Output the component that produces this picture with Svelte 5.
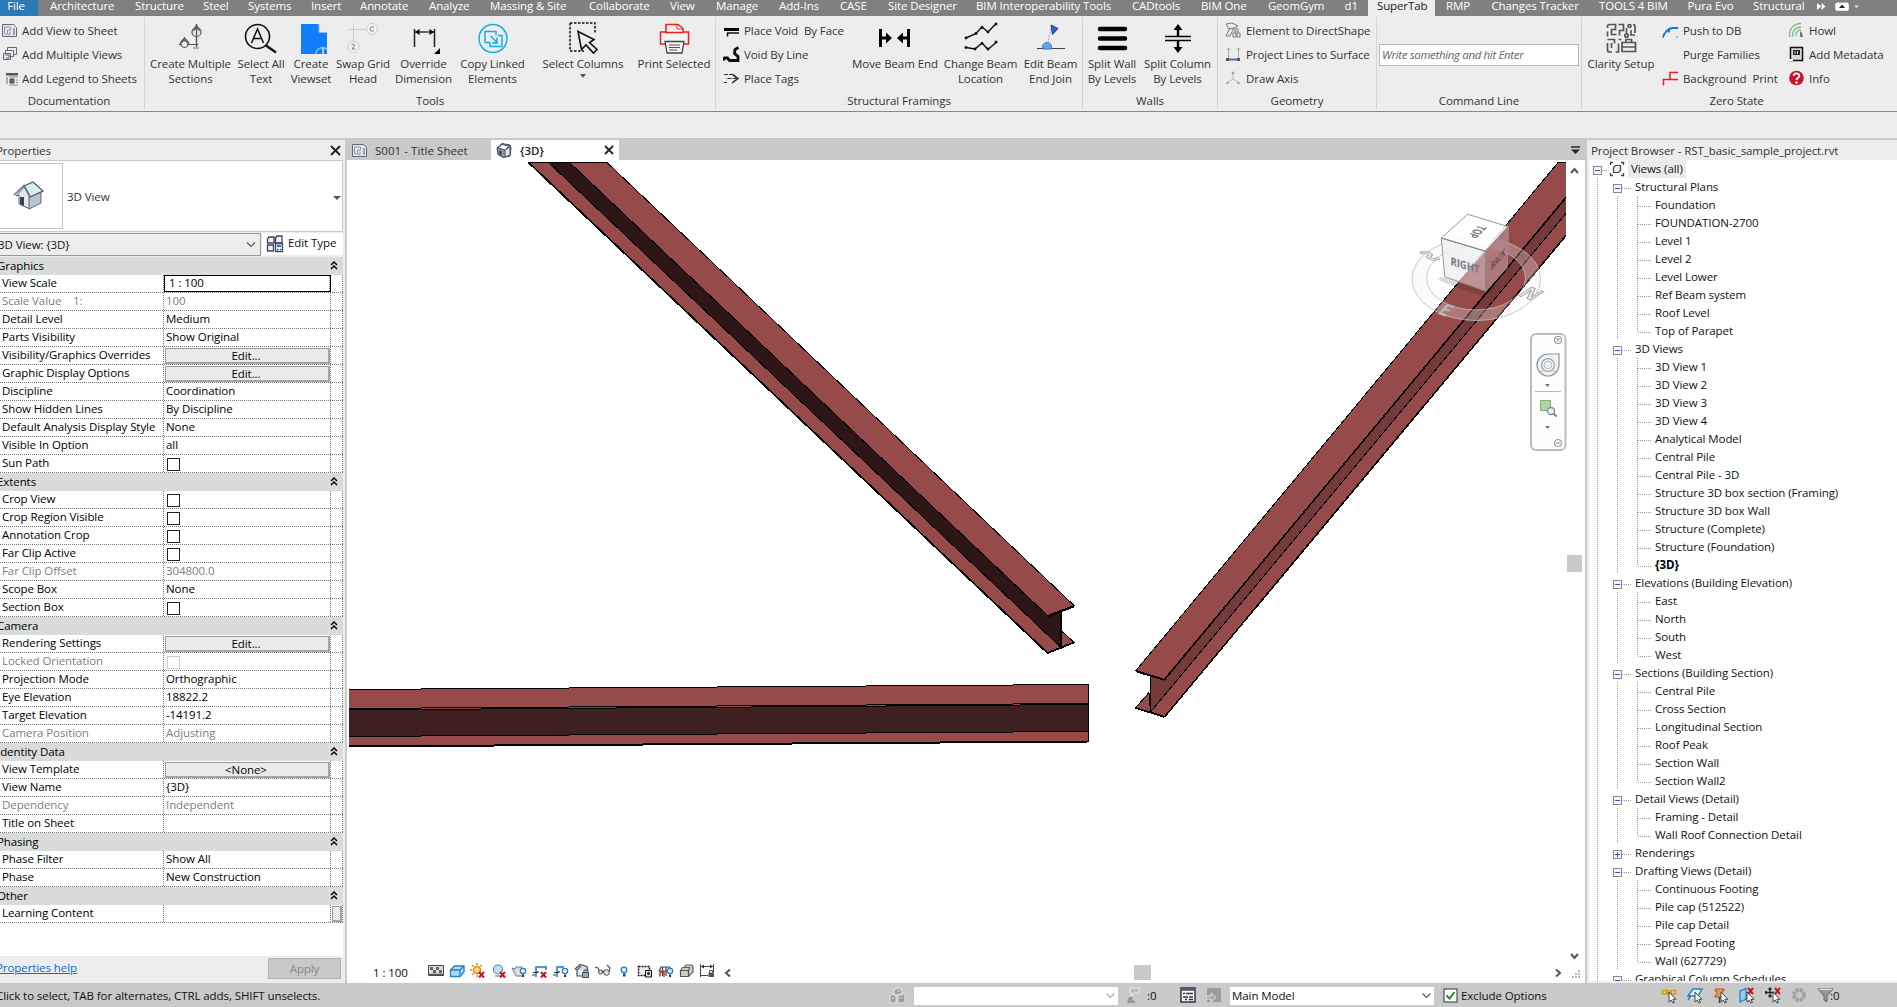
<script>
  // [label, left edge of the label]; each tab is as wide as the distance to the next one
  const tabStops = [
    ['Architecture', 50], ['Structure', 135], ['Steel', 203], ['Systems', 248], ['Insert', 311],
    ['Annotate', 360], ['Analyze', 429], ['Massing & Site', 490], ['Collaborate', 589], ['View', 670],
    ['Manage', 716], ['Add-Ins', 779], ['CASE', 840], ['Site Designer', 888],
    ['BIM Interoperability Tools', 976], ['CADtools', 1132], ['BIM One', 1201], ['GeomGym', 1268],
    ['d1', 1344.5], ['SuperTab', 1377], ['RMP', 1446], ['Changes Tracker', 1491.5],
    ['TOOLS 4 BIM', 1599], ['Pura Evo', 1687.5], ['Structural', 1753], ['', 1817]
  ];
  const tabs = tabStops.slice(0, -1).map(([label, x], i) => ({ label, w: tabStops[i + 1][1] - x }));

  const groups = [
    { name: 'Documentation', w: 145, shift: -3, items: [
      { small: [['sheet', 'Add View to Sheet'], ['multi', 'Add Multiple Views'], ['legend', 'Add Legend to Sheets']], w: 144, pad: 1 }
    ] },
    { name: 'Tools', w: 571, shift: 0, items: [
      { big: 'sections', text: ['Create Multiple', 'Sections'], w: 88, pad: 3 },
      { big: 'selectText', text: ['Select All', 'Text'], w: 56 },
      { big: 'viewset', text: ['Create', 'Viewset'], w: 44 },
      { big: 'swap', text: ['Swap Grid', 'Head'], w: 60 },
      { big: 'dimension', text: ['Override', 'Dimension'], w: 61 },
      { big: 'linked', text: ['Copy Linked', 'Elements'], w: 77 },
      { big: 'columns', text: ['Select Columns'], w: 104, caret: true },
      { big: 'print', text: ['Print Selected'], w: 78 }
    ] },
    { name: 'Structural Framings', w: 367, shift: 0, items: [
      { small: [['voidFace', 'Place Void  By Face'], ['voidLine', 'Void By Line'], ['tags', 'Place Tags']], w: 134, pad: 7 },
      { big: 'moveEnd', text: ['Move Beam End'], w: 90 },
      { big: 'changeLoc', text: ['Change Beam', 'Location'], w: 81 },
      { big: 'endJoin', text: ['Edit Beam', 'End Join'], w: 59 }
    ] },
    { name: 'Walls', w: 135, shift: 0, items: [
      { big: 'splitWall', text: ['Split Wall', 'By Levels'], w: 57, pad: 1 },
      { big: 'splitCol', text: ['Split Column', 'By Levels'], w: 75 }
    ] },
    { name: 'Geometry', w: 159, shift: 0, items: [
      { small: [['direct', 'Element to DirectShape'], ['project', 'Project Lines to Surface'], ['axis', 'Draw Axis']], w: 157, pad: 7 }
    ] },
    { name: 'Command Line', w: 205, shift: 0, items: [{ input: true, w: 204 }] },
    { name: 'Zero State', w: 315, shift: -3, items: [
      { big: 'clarity', text: ['Clarity Setup'], w: 77, pad: 1 },
      { small: [['push', 'Push to DB'], ['', 'Purge Families'], ['bgprint', 'Background  Print']], w: 126, pad: 3 },
      { small: [['howl', 'Howl'], ['meta', 'Add Metadata'], ['info', 'Info']], w: 110, pad: 3 }
    ] }
  ];

  const props = [
    ['Graphics', [
      ['View Scale', '1 : 100', 'field'], ['Scale Value    1:', '100', 'off'], ['Detail Level', 'Medium'],
      ['Parts Visibility', 'Show Original'], ['Visibility/Graphics Overrides', 'Edit...', 'btn'],
      ['Graphic Display Options', 'Edit...', 'btn'], ['Discipline', 'Coordination'],
      ['Show Hidden Lines', 'By Discipline'], ['Default Analysis Display Style', 'None'],
      ['Visible In Option', 'all'], ['Sun Path', '', 'check']
    ]],
    ['Extents', [
      ['Crop View', '', 'check'], ['Crop Region Visible', '', 'check'], ['Annotation Crop', '', 'check'],
      ['Far Clip Active', '', 'check'], ['Far Clip Offset', '304800.0', 'off'], ['Scope Box', 'None'],
      ['Section Box', '', 'check']
    ]],
    ['Camera', [
      ['Rendering Settings', 'Edit...', 'btn'], ['Locked Orientation', '', 'check off'],
      ['Projection Mode', 'Orthographic'], ['Eye Elevation', '18822.2'], ['Target Elevation', '-14191.2'],
      ['Camera Position', 'Adjusting', 'off']
    ]],
    ['Identity Data', [
      ['View Template', '<None>', 'btn'], ['View Name', '{3D}'], ['Dependency', 'Independent', 'off'],
      ['Title on Sheet', '']
    ]],
    ['Phasing', [['Phase Filter', 'Show All'], ['Phase', 'New Construction']]],
    ['Other', [['Learning Content', '', 'more']]]
  ];

  const tree = [
    ['Structural Plans', ['Foundation', 'FOUNDATION-2700', 'Level 1', 'Level 2', 'Level Lower', 'Ref Beam system', 'Roof Level', 'Top of Parapet']],
    ['3D Views', ['3D View 1', '3D View 2', '3D View 3', '3D View 4', 'Analytical Model', 'Central Pile', 'Central Pile - 3D', 'Structure 3D box section (Framing)', 'Structure 3D box Wall', 'Structure (Complete)', 'Structure (Foundation)', '{3D}']],
    ['Elevations (Building Elevation)', ['East', 'North', 'South', 'West']],
    ['Sections (Building Section)', ['Central Pile', 'Cross Section', 'Longitudinal Section', 'Roof Peak', 'Section Wall', 'Section Wall2']],
    ['Detail Views (Detail)', ['Framing - Detail', 'Wall Roof Connection Detail']],
    ['Renderings', []],
    ['Drafting Views (Detail)', ['Continuous Footing', 'Pile cap (512522)', 'Pile cap Detail', 'Spread Footing', 'Wall (627729)']],
    ['Graphical Column Schedules', []]
  ];

  const cursor = '<path d="M8 5v10l2.3-2 1.6 3 1.5-.7-1.5-3h3z" fill="#fff" stroke="#333" stroke-width=".9"/>';
  const redX = '<path d="M9 9l5 5.500M14 9l-5 5.500" stroke="#c4161c" stroke-width="2"/>';
  const bulb = '<circle cx="12" cy="8" r="2.700" fill="#d6ecff" stroke="#2a7fc9" stroke-width="1.200"/><path d="M11 11.500h2.200v2.500H11z" fill="#345"/>';

  const art = {
    sections: '<g fill="none" stroke="#555" stroke-width="1.2"><circle cx="22.5" cy="10" r="4.5"/><path d="M22.500 2v25M5 22.500h19M10.500 22v-7"/><circle cx="10.500" cy="21.500" r="3.800"/></g><path d="M22.500 2l4.500 7h-9z" fill="#666"/><path d="M10.500 15l5.500 6.500h-11z" fill="#666"/><circle cx="10.500" cy="22" r="2.500" fill="#eee"/><circle cx="22.500" cy="10.500" r="3" fill="#e4e4e4"/><path d="M22.500 2v25" stroke="#555" stroke-width="1.200"/><path d="M19 25h6v2h-6z" fill="#c4a4a4"/>',
    selectText: '<g fill="none" stroke="#111"><circle cx="13.500" cy="14.500" r="12" stroke-width="1.600"/><path d="M7.500 21l6-14 6 14M9.500 16.500h8" stroke-width="1.500"/><path d="M22 23.500l10 7" stroke-width="2.600"/></g>',
    viewset: '<path d="M7 2h17l9 9v21H7z" fill="#127cff"/><path d="M25 2.500v8h8" fill="#eee" stroke="#8ab8f5"/><path d="M22 32a6.500 6.500 0 0 1 11-4.500" fill="none" stroke="#8cc2ff" stroke-width="1.500"/><path d="M29 26v6" stroke="#d6eaff" stroke-width="1.500"/>',
    swap: '<path d="M2 7.500h18M7.500 1v19" stroke="#ccc" fill="none"/><g fill="#f2f2f2" stroke="#ccc"><circle cx="26" cy="7" r="5.500"/><circle cx="7.500" cy="25" r="5.500"/></g><path d="M28 5.500a2.300 2.300 0 1 0 0 3M6 23.500c0-2 3.500-1.500 2.500.5L6 27h3.500" fill="none" stroke="#777"/>',
    dimension: '<g stroke="#222" fill="none"><path d="M7.500 7v18M27.500 7v18" stroke-width="1.500"/><path d="M8 10h19" stroke-width="1.300"/></g><path d="M8 10l4.500-3v6zM27 10l-4.500-3v6zM33 26v6h-6z" fill="#000"/>',
    linked: '<g fill="none" stroke="#12b0e0" stroke-width="1.500"><circle cx="17" cy="16.500" r="14"/><path d="M20 13.500V9.500H9v11h5M22 13.500h4v11H14v-4M14.500 14l6 6M21 15.500V21h-5"/></g>',
    columns: '<path d="M4 1h25v11M4 1v28h14" fill="none" stroke="#111" stroke-width="1.500" stroke-dasharray="2.500 1.500"/><path d="M12 9.500l3.500 18 4.500-4.500 7.500 8 3.500-3.500-7.500-7 4.500-3z" fill="#eee" stroke="#111" stroke-width="1.600"/>',
    print: '<g fill="#f4f4f4" stroke="#ef1c24" stroke-width="1.500"><path d="M9 10H3.500v12h28V10h-5"/><path d="M9 10.500V2.500h12l5 4v4z"/></g><path d="M20 3v4h6" fill="none" stroke="#ef1c24"/><path d="M8 19.500h19l-2 11.500h-15z" fill="#f4f4f4" stroke="#444" stroke-width="1.300"/><path d="M12 23h11M12 25.500h11M12 28h8" stroke="#555"/>',
    moveEnd: '<path d="M1 7h3v18H1zM29 7h3v18h-3zM4 14.500h4v-4l6 5.500-6 5.500v-4H4zM29 14.500h-4v-4L19 16l6 5.500v-4h4z" fill="#050505"/>',
    changeLoc: '<g fill="none" stroke="#111" stroke-width="1.400"><path d="M2 16l10-4.500 6-6.500 6 5L32.500 1M2 25.500l9 1.500 7-6 6 6.500 8.500-7.500"/></g><g fill="#111"><circle cx="2" cy="16" r="1.400"/><circle cx="12" cy="11.500" r="1.400"/><circle cx="18" cy="5.500" r="1.400"/><circle cx="24" cy="10" r="1.400"/><circle cx="32" cy="2" r="1.500"/><circle cx="2" cy="25.500" r="1.400"/><circle cx="11" cy="27" r="1.400"/><circle cx="18" cy="21.500" r="1.400"/><circle cx="24" cy="27" r="1.400"/><circle cx="32" cy="20" r="1.500"/></g>',
    endJoin: '<path d="M3 26.500h28" stroke="#444"/><path d="M9 27a4.500 4.500 0 1 1 8 0z" fill="#5fa8ef" stroke="#3a74b8"/><path d="M14 21l3-15" stroke="#7fb4ea" stroke-dasharray="2 1"/><path d="M17 3l7 3.500-5.500 6z" fill="#2d5fc4" stroke="#1d3f8c"/>',
    splitWall: '<path d="M5 7h25M5 16.500h25M5 26h25" stroke="#000" stroke-width="4.600" stroke-linecap="round"/>',
    splitCol: '<path d="M4 14.500h26M4 18.500h26" stroke="#000" stroke-width="1.600"/><path d="M17 14V6M17 19v8" stroke="#000" stroke-width="2.400"/><path d="M17 2l4.500 6h-9zM17 31l4.500-6h-9z"/>',
    clarity: '<g fill="none" stroke="#555" stroke-width="1.700"><path d="M5.500 2.500h6v5h-4v5h5M3.500 6v-1.500a2 2 0 0 1 2-2M3.500 9.500v5M3.500 17.500h7v4M3.500 21v7a2 2 0 0 0 2 2H8M7.500 21v5M14.500 2.500h5v6h-4v5M11.500 30h3v-8.500M14.500 17.500h3M22.500 12V6M29 2.500a2 2 0 0 1 2 2V11M27 8v5h4"/><circle cx="22.500" cy="13.500" r="1.700"/><circle cx="25.500" cy="4" r="1.500"/><path d="M18 20.500h13.500v9H18zM22 20v-2.500h5.500V20M18 25h13.500"/></g>',
    sheet: '<path d="M1.500 2.500h11l3 3v9h-14z" fill="#e4e9ee" stroke="#667"/><path d="M3.500 5h6v3h-3v4h-3zM9 9.500v3H7" fill="none" stroke="#8a97a5"/><path d="M13 6v7" stroke="#889" stroke-width="1.500"/>',
    multi: '<g fill="#e8edf2" stroke="#667"><path d="M6.500 1.500h9v7h-9z"/><path d="M4.500 4.500h8v6h-8z"/><path d="M2.500 7.500h7v6h-7z"/></g><path d="M4 9h4v3H5" fill="none" stroke="#567"/>',
    legend: '<path d="M5 3h12v2.500H5z" fill="#555"/><path d="M5 7h2v7H5z" fill="#aaa"/><path d="M8 7h9M8 15h9" stroke="#889"/><path d="M9 9h4v4H9z" fill="#667" stroke="#445"/><path d="M15 10h2M15 12.500h2" stroke="#889"/>',
    voidFace: '<path d="M1 6h15v3H1z" fill="#050505"/><path d="M4.500 14.500V11H16" fill="none" stroke="#111" stroke-width="1.400"/>',
    voidLine: '<path d="M0 14.500l1.500-2.500h3L6.500 14.500h8.500v-4L11.500 7.500 12 3.500 15.500 1.500" fill="none" stroke="#0a0a0a" stroke-width="2.800"/>',
    tags: '<path d="M1 4.500h9l4 4H3M1 12.500h3" fill="none" stroke="#333" stroke-width="1.200" stroke-dasharray="4 1"/><path d="M9 4l6 4.500L9 13" fill="none" stroke="#222" stroke-width="1.400"/>',
    direct: '<path d="M1 2l6-1 6 3-4 2-5 1zM5 6L1 14h4l4-8M8 11h3v4H8zM12 11h3v4h-3zM10 7h3v3h-3z" fill="none" stroke="#777"/>',
    project: '<path d="M3.500 2v10M13.500 2v10M1.500 4l2-2 2 2M11.500 4l2-2 2 2" fill="none" stroke="#aaa"/><path d="M2 13.500h13" stroke="#456fa8" stroke-width="2"/><path d="M1 12h3v3H1zM12 12h3v3h-3z" fill="#555"/>',
    axis: '<path d="M8 2v7L2 13M8 9l6 4" fill="none" stroke="#bbb"/><path d="M8 1l1.500 3h-3zM1 14l3-.5-1.500-2.500zM15 14l-3-.5 1.500-2.500z" fill="#999"/>',
    push: '<path d="M1 15.500C2 11 6 6 11 6h5M7 6.500v4" fill="none" stroke="#1173d4" stroke-width="1.800"/><path d="M14 14h2v2h-2z" fill="#9cc4ee"/>',
    bgprint: '<path d="M1.500 15.500V9.500H8v-7h8M8 9.500h8" fill="none" stroke="#e0202a" stroke-width="1.500"/>',
    howl: '<g fill="none" stroke="#7bbf86" stroke-width="1.300"><path d="M1.500 15C1 6 6 1.500 13 1.500M4.500 15C4 9 7 5 13 5M8 14c-.5-4 2-6 5-6"/></g><path d="M12 9l2 2 1 4h-3z" fill="#777"/>',
    meta: '<path d="M2.500 1.500h12v13h-12z" fill="#d8d8d8" stroke="#111" stroke-width="1.500"/><path d="M5 4h7v5H5z" fill="#222"/><path d="M7 5v3M9.500 5v3" stroke="#ddd"/><path d="M1 13h4v2H1z" fill="#eee"/>',
    info: '<circle cx="8.500" cy="8" r="7.300" fill="#c9142c"/><path d="M5.700 6c0-3.500 5.600-3.500 5.600-.3C11.300 8 8.500 8 8.500 10" fill="none" stroke="#fff" stroke-width="1.900"/><circle cx="8.500" cy="12.500" r="1.200" fill="#fff"/>',
    cube: '<path d="M1 6l5-4.500 8 1.500 1 3-1 8-7 1.500-5-3z" fill="#8b95a3" stroke="#3d4653"/><path d="M2 6l4-3.500 7 1.500-4 4z" fill="#fff" stroke="#4b5563"/><path d="M9 8l5-3v8l-5 2z" fill="#dbe5ee" stroke="#4b5563"/><path d="M3.500 8.500v4l2 1v-4z" fill="#334"/>',
    scope: '<path d="M4 1.500H1.500V4M12 1.500h2.500V4M4 14.500H1.500V12M12 14.500h2.500V12" fill="none" stroke="#444" stroke-width="1.300"/><path d="M4.500 6.500l2-2h5v5l-2 2h-5z" fill="#eef" stroke="#444" stroke-width="1.200"/>',
    v1: '<path d="M.5 2.500h15v10H.5z" fill="#dcdcdc" stroke="#445"/><path d="M2 4h3v3H2zM8 4h3v3H8zM5 7h3v3H5zM11 7h3v3h-3z" fill="#666"/><path d="M1 11.500h14" stroke="#556" stroke-width="1.500"/>',
    v2: '<path d="M1.500 7l4-4h9.500v6l-4 4.500H1.500z" fill="#a9dcf5" stroke="#2a7fb5" stroke-width="1.300"/><path d="M1.500 7H11v6.500M11 7l4-4" fill="none" stroke="#2a7fb5" stroke-width="1.300"/>',
    v3: '<circle cx="7" cy="7" r="3.500" fill="#ffd67a" stroke="#e08a12" stroke-width="1.500"/><path d="M7 0v2M7 12v2M0 7h2M2 2l1.500 1.500M12 2l-1.500 1.500M2 12l1.500-1.500" stroke="#e08a12" stroke-width="1.500"/>' + redX,
    v4: '<circle cx="7" cy="6.500" r="4.500" fill="#bfe0f7" stroke="#4a8cc2" stroke-width="1.200"/><path d="M4 13h6" stroke="#999" stroke-width="1.500"/>' + redX,
    v5: '<path d="M1 5l3 1 1-2h6l2 3-1 6H5L3 9z" fill="#ddd" stroke="#777"/>' + bulb,
    v6: '<path d="M4 14V4h10v3M4 9h3" fill="none" stroke="#2277b8" stroke-width="1.500"/><path d="M0 12h3M1 9.500h5" stroke="#333"/>' + redX,
    v7: '<path d="M4 14V4h7M4 9h3" fill="none" stroke="#2277b8" stroke-width="1.500"/><path d="M0 12h3M1 9.500h5" stroke="#333"/>' + bulb,
    v8: '<path d="M1 6l5-4.500 7 2 1 5M3 6v7h5M1 6l2 1 4-4" fill="#d5dade" stroke="#555" stroke-width="1.200"/><path d="M8.500 9.500h6v5h-6z" fill="#8fb5b6" stroke="#345"/><path d="M10 9V7h3v2" fill="none" stroke="#345"/>',
    v9: '<path d="M0 4l3 1 2 4 3-1 2 3M14 9l1-4-3-3" fill="none" stroke="#555" stroke-width="1.200"/><circle cx="5.500" cy="9" r="2" fill="#ddd" stroke="#444"/><circle cx="11.500" cy="9.500" r="2.800" fill="#d5e8f3" stroke="#444"/>',
    v10: '<circle cx="8" cy="7" r="2.800" fill="#d6ecff" stroke="#2a7fc9" stroke-width="1.300"/><path d="M7 10.500h2.500v3H7z" fill="#345"/>',
    v11: '<path d="M1.500 3.500h11v9h-11z" fill="#eee" stroke="#111" stroke-dasharray="2 1" stroke-width="1.500"/><path d="M8.500 7.500h6v6.500h-6z" fill="#ddd" stroke="#111"/><circle cx="11.500" cy="10.500" r="1.400" fill="#222"/>',
    v12: '<path d="M1 8l2-4h9M4.500 13V4M8 13V4M1 8h9M12 4v2" fill="none" stroke="#444" stroke-width="1.200"/><path d="M2 13.500V9h4v5" fill="none" stroke="#c22" stroke-width="1.400"/>' + bulb,
    v13: '<path d="M1.500 7.500l2-3h7l-1 3M5 4.500L7 2h6l1 2v5l-4 4" fill="#ccc" stroke="#666" stroke-width="1.200"/><path d="M1.500 7.500h8v6h-8z" fill="#ccc" stroke="#555" stroke-width="1.200"/>',
    v14: '<path d="M1.500 1v13M14.500 1v8M1 3.500h14M1 12.500h8" fill="none" stroke="#444"/><path d="M2 3.500l3-2v4zM14 3.500l-3-2v4z" fill="#333"/><path d="M9.500 9.500H15v4.500H9.500z" fill="#555"/><path d="M10.500 9.500v-2h3v2" fill="none" stroke="#555"/>',
    workset: '<path d="M1 9l3-2 3 2v7H1zM5 3l4-2 4 2v5H5zM9 8l4-2 3 2v8H9z" fill="#a0a0a0" stroke="#e4e4e4"/><path d="M3 11h2M11 11h2M8 4h3" stroke="#ddd"/>',
    editable: '<path d="M4 1h9v5H8L6 9V6H4z" fill="#bbb" stroke="#eee"/><path d="M1 16l2-6h4l-1 3 3 1v2z" fill="#999"/>',
    options: '<path d="M1 1h14v14H1z" fill="#f4f8fb" stroke="#334" stroke-width="1.500"/><path d="M1 2.500h14" stroke="#556" stroke-width="2.500"/><path d="M3 6.500h2M3 10h5M6 6.500h7M9 10h4M5 12.500h2M9 12.500h4" stroke="#334" stroke-width="1.300"/>',
    addOpt: '<path d="M1 1h14v14H1z" fill="#9c9c9c"/><path d="M0 9h5V6l5 4.500L5 15v-3H0z" fill="#a8a8a8" stroke="#e6e6e6"/>',
    s1: '<path d="M1.500 3.500h5v3.500h-5zM9.500 3.500h5v3.500h-5zM5 5.300h6" fill="none" stroke="#d99a14" stroke-width="1.700"/>' + cursor,
    s2: '<path d="M1 9l5-7h9l-4 7zM1 13l3-4h8" fill="#dff2fc" stroke="#1d7fc2" stroke-width="1.400"/>' + cursor,
    s3: '<path d="M2 2h9v2H9v4h2v2H2V8h2V4H2z" fill="#e79a62" stroke="#b8571c"/><path d="M6.500 10v6" stroke="#444" stroke-width="1.500"/>' + cursor,
    s4: '<path d="M1 4l6-2.500V12l-6 3z" fill="#8fd0f2" stroke="#1d7fc2" stroke-width="1.200"/><path d="M9 1l5 6M14 1L9 7" stroke="#c4161c" stroke-width="2"/>' + cursor,
    s5: '<path d="M5 1v9M0 5.500h9M3.500 2.500L5 1l1.500 1.500M3.500 8.500L5 10l1.500-1.500M1.500 4L0 5.500 1.500 7" fill="none" stroke="#222" stroke-width="1.300"/><path d="M10 1l5 6M15 1l-5 6" stroke="#c4161c" stroke-width="2"/>' + cursor,
    s6: '<circle cx="8" cy="8" r="5" fill="none" stroke="#a0a0a0" stroke-width="4" stroke-dasharray="3 .93"/>',
    funnel: '<path d="M1 2h15l-6 7v6l-3-2V9z" fill="#8f9aa3" stroke="#5d6870"/><path d="M2 2.500h13" stroke="#dde5ea"/>',
    edittype: '<g fill="#e6f3fb" stroke="#445" stroke-width="1.300"><path d="M1.500 4l1.500-2h5v6H1.500zM9.500 3l1.500-2h5v7H9.500zM1.500 10h6v6h-6z"/><path d="M9.500 8.500h7v8h-7z"/></g><path d="M11 10h4v2h-4z" fill="#2a6dc0"/><path d="M11 14.500h1.500M14 14.500h1" stroke="#333"/>',
    house: '<path d="M4 16L13 6l5 10v13l-11-5v-9z" fill="#e3e8ee" stroke="#5c6673"/><path d="M17 17l12-5v11l-12 6z" fill="#b9c4d0" stroke="#5c6673"/><path d="M8 17h4v9l-4-2z" fill="#3c4350"/><path d="M12 6l9-4 10 9-13 6z" fill="#d9f0f2" stroke="#4b5563" stroke-width="1.200"/><path d="M2 15L12 5.500l6 11" fill="none" stroke="#6b7480" stroke-width="1.600"/>'
  };

  const viewIcons = ['v1', 'v2', 'v3', 'v4', 'v5', 'v6', 'v7', 'v8', 'v9', 'v10', 'v11', 'v12', 'v13', 'v14'];
  const selectIcons = ['s1', 's2', 's3', 's4', 's5', 's6', 'funnel'];
</script>

{#snippet icon(name, w, h)}
  <svg class="icon" width={w} height={h} viewBox="0 0 {w} {h}">{@html art[name] ?? ''}</svg>
{/snippet}

<div class="app">
  <nav class="tabs">
    <span class="file">File</span>
    {#each tabs as t}
      <span class="tab" class:active={t.label === 'SuperTab'} style:width="{t.w}px">{t.label}</span>
    {/each}
    <svg class="icon" width="50" height="16" viewBox="0 0 50 16">
      <path d="M0 3l4 3.500L0 10zM4.500 3l4 3.500-4 3.500z" fill="#fff" />
      <rect x="18.500" y="3" width="13" height="7.500" rx="1.500" fill="#fff" stroke="#dfe8f0" />
      <path d="M22 8l3-3.500L28 8z" fill="#222" />
      <path d="M37 5.500h5L39.500 8z" fill="#dde" />
    </svg>
  </nav>

  <header class="ribbon">
    {#each groups as g}
      <section class="group" style:width="{g.w}px">
        <div class="tools">
          {#each g.items as it}
            {#if it.big}
              <div class="big" style:width="{it.w}px" style:padding-left="{it.pad ?? 0}px">
                {@render icon(it.big, 34, 33)}
                {#each it.text as line}<span>{line}</span>{/each}
                {#if it.caret}<i class="caret"></i>{/if}
              </div>
            {:else if it.small}
              <div class="smalls" style:width="{it.w}px" style:padding-left="{it.pad ?? 0}px">
                {#each it.small as [ic, label]}
                  <div class="small">{@render icon(ic, 18, 16)}<span>{label}</span></div>
                {/each}
              </div>
            {:else}
              <div class="cmd"><span>Write something and hit Enter</span></div>
            {/if}
          {/each}
        </div>
        <div class="gname" style:padding-right="{-g.shift * 2}px">{g.name}</div>
      </section>
    {/each}
  </header>
  <div class="optionsbar"></div>

  <main>
    <aside class="props">
      <div class="phead"><span>Properties</span>
        <svg class="icon" width="11" height="11" viewBox="0 0 11 11"><path d="M1 1l9 9M10 1l-9 9" stroke="#222" stroke-width="1.800" /></svg>
      </div>
      <div class="typebox">
        <div class="thumb">{@render icon('house', 34, 32)}</div>
        <span>3D View</span>
        <i class="caret wide"></i>
      </div>
      <div class="selrow">
        <div class="combo"><span>3D View: {'{3D}'}</span>
          <svg class="icon" width="10" height="6" viewBox="0 0 10 6"><path d="M1 .5l4 4 4-4" fill="none" stroke="#555" stroke-width="1.200" /></svg>
        </div>
        <div class="edittype">{@render icon('edittype', 18, 18)}<span>Edit Type</span></div>
      </div>
      <div class="plist">
        {#each props as [title, rows]}
          <div class="sect"><span>{title}</span>
            <svg class="icon" width="8" height="9" viewBox="0 0 8 9"><path d="M1 4l3-3 3 3M1 8l3-3 3 3" fill="none" stroke="#000" stroke-width="1.500" /></svg>
          </div>
          {#each rows as [name, value, kind]}
            <div class="row {kind ?? ''}">
              <span class="name">{name}</span>
              <span class="value">
                {#if kind?.startsWith('check')}<i class="box"></i>{:else if kind === 'btn'}<b class="pbtn">{value}</b>{:else}{value}{/if}
              </span>
              <span class="end">{#if kind === 'more'}<b class="morebtn"></b>{/if}</span>
            </div>
          {/each}
        {/each}
      </div>
      <div class="pfoot"><span class="link">Properties help</span><span class="apply">Apply</span></div>
    </aside>

    <section class="work">
      <div class="doctabs">
        <div class="doc">{@render icon('sheet', 17, 16)}<span>S001 - Title Sheet</span></div>
        <div class="doc on">{@render icon('cube', 16, 16)}<span>{'{3D}'}</span>
          <svg class="icon" width="10" height="10" viewBox="0 0 10 10"><path d="M1 1l8 8M9 1l-8 8" stroke="#222" stroke-width="1.800" /></svg>
        </div>
        <svg class="icon menu" width="9" height="8" viewBox="0 0 9 8"><path d="M0 1h9" stroke="#222" stroke-width="1.500" /><path d="M0 3.500h9L4.500 8z" fill="#222" /></svg>
      </div>

      <div class="canvas">
        <svg class="scene" width="1238" height="823" viewBox="347 160 1238 823">
          <g stroke="#000" stroke-width="1" shape-rendering="crispEdges">
            <!-- diagonal beam, left -->
            <path d="M1061.500 631l13 11.700-13 5z" fill="#964a4a" />
            <path d="M548 162L1061 647.500V612L569 162z" fill="#2e1616" />
            <path d="M528 162L1047.500 653l13.500-5.500L548 162z" fill="#964a4a" />
            <path d="M569 162L1047.500 615.500l26.500-10L606.500 162z" fill="#964a4a" />
            <path d="M1061 612v35.500M1047.500 616.500l26.500-10M1047.500 653l26.500-10.500M528 162L1047.500 653" stroke-width="1.800" fill="none" />
            <!-- diagonal beam, right -->
            <path d="M1149 692.500l-13.500 15.500 15 4z" fill="#964a4a" />
            <path d="M1150.500 677v35L1566 213.500V197z" fill="#753b3b" />
            <path d="M1150.500 712l14 4.500L1566 235v-21.500z" fill="#964a4a" />
            <path d="M1136 670.500l28.500 9L1566 197.500V162h-7.500z" fill="#964a4a" />
            <path d="M1150.500 677v35M1136 671.500l28.500 8.500M1135.500 708l29 9M1164.500 717L1566 235.500M1164.500 679.500L1566 197.500" stroke-width="1.600" fill="none" />
            <!-- horizontal beam -->
            <path d="M348 689.500L1088.500 684.500V742L348 747z" fill="#964a4a" />
            <path d="M348 710L1088.500 704.500V731.500L348 736.500z" fill="#3f2020" />
            <path d="M348 708.500L1088.500 703.500M348 746L1088.500 741" />
          </g>
          <path d="M347 160h2v590h-2zM1566 160h19v560h-19zM347 160h1238v2h-1238z" fill="#fff" />

          <!-- compass ring -->
          <path fill-rule="evenodd" fill="#f0f0f0" fill-opacity=".28" stroke="#bbb" stroke-opacity=".8" d="M1412 279a64.300 41.500 0 1 0 128.600 0a64.300 41.500 0 1 0-128.600 0zM1426.500 278a49.500 32 0 1 0 99 0a49.500 32 0 1 0-99 0z" />
          <g fill="#ddd" fill-opacity=".6" stroke="#999" stroke-width=".8" font-size="20" font-weight="700" font-family="Open Sans, sans-serif">
            <text transform="matrix(.95 .35 -.65 .7 1436 313)">E</text>
            <text transform="matrix(.95 .35 -.9 .6 1517 295)">N</text>
            <text transform="matrix(-.9 .2 .9 .6 1441 259)">S</text>
          </g>
          <path d="M1441 277l-3 3 20 8 26 8 12-8z" fill="#000" opacity=".14" />
          <!-- view cube -->
          <g stroke="#999" stroke-width="1">
            <path d="M1467.700 214.300l40.600 12.400-22.600 24.600-44.400-13.300z" fill="#fff" fill-opacity=".85" />
            <path d="M1441.300 238l44.400 13.300V291l-41-14.300z" fill="#eef0f1" fill-opacity=".85" />
            <path d="M1485.700 251.300l22.600-24.600-1 40.600-21.600 23.700z" fill="#d5d7d8" fill-opacity=".5" />
            <path d="M1508 227l-22.300 24.300-28 31 28 8.700 21.600-23.700z" fill="#a9686a" fill-opacity=".6" stroke="none" />
            <path d="M1441.300 238l44.400 13.300V291M1485.700 251.300l22.600-24.600" fill="none" stroke="#888" />
          </g>
          <g fill="#737b84" font-size="14" font-weight="700" font-family="Open Sans, sans-serif">
            <text transform="matrix(.68 .2 0 .8 1450.500 265)">RIGHT</text>
            <text transform="matrix(.38 -.42 0 .8 1491 271)" fill="#6b5055">BACK</text>
            <text transform="matrix(-.4 .4 -.85 -.27 1478.500 225)">TOP</text>
          </g>

          <!-- navigation bar -->
          <rect x="1531" y="334" width="34.500" height="116" rx="5" fill="#fdfdfd" stroke="#bcbcbc" stroke-width="2" />
          <g fill="none" stroke="#999" stroke-width="1.200">
            <circle cx="1558" cy="340" r="3.500" /><path d="M1556.500 338.500l3 3M1559.500 338.500l-3 3" />
            <circle cx="1558" cy="443" r="3.500" /><path d="M1556 443h4" />
          </g>
          <path d="M1548 354h11v11a11 11 0 1 1-11-11z" fill="#eef1f3" stroke="#8d959c" stroke-width="1.200" />
          <circle cx="1548" cy="365" r="6.300" fill="#fff" stroke="#9aa2a8" stroke-width="1.200" />
          <circle cx="1548" cy="365" r="4" fill="#eef" stroke="#b5bcc2" />
          <path d="M1543.500 369.500l-3 3M1552.500 369.500l3 3" stroke="#9aa2a8" />
          <path d="M1545 384h5l-2.500 3zM1545 426h5l-2.500 3z" fill="#777" />
          <path d="M1535 391.500h26" stroke="#bbb" />
          <path d="M1540.500 400.500h10v10h-10z" fill="#b2d2a8" stroke="#7fae74" />
          <circle cx="1551" cy="411" r="3.500" fill="#e8f2f8" stroke="#889" stroke-width="1.300" />
          <path d="M1553.500 413.500l3 3" stroke="#778" stroke-width="1.800" />

          <!-- scrollbars -->
          <g fill="none" stroke="#555" stroke-width="2">
            <path d="M1571 173l3.500-4 3.500 4M1571 954l3.500 4 3.500-4M1556 969.500l4 3.500-4 3.500M730 969.500l-4 3.500 4 3.500" />
          </g>
          <path d="M1567 555h15v17h-15zM1134 965h17v15h-17z" fill="#c9c9c9" />
          <path d="M1578 970h2v2h-2zM1575 973h2v2h-2zM1578 973h2v2h-2zM1572 976h2v2h-2zM1575 976h2v2h-2zM1578 976h2v2h-2z" fill="#bbb" />
        </svg>
        <div class="viewbar">
          <span>1 : 100</span>
          {#each viewIcons as n}{@render icon(n, 16, 16)}{/each}
        </div>
      </div>
    </section>

    <aside class="browser">
      <div class="bhead">Project Browser - RST_basic_sample_project.rvt</div>
      <div class="tree">
        <div class="node l0"><i class="exp"></i><i class="dash"></i>{@render icon('scope', 16, 16)}<span class="sel">Views (all)</span></div>
        {#each tree as [title, kids]}
          <div class="node l1"><i class="trunk"></i><i class="exp" class:plus={title === 'Renderings'}></i><i class="dash"></i><span>{title}</span></div>
          {#each kids as kid, i}
            <div class="node l2" class:last={i === kids.length - 1}><i class="trunk"></i><i class="branch"></i><i class="leaf"></i><i class="dash"></i><span class:cur={kid === '{3D}'}>{kid}</span></div>
          {/each}
        {/each}
      </div>
    </aside>
  </main>

  <footer>
    <span class="hint">Click to select, TAB for alternates, CTRL adds, SHIFT unselects.</span>
    {@render icon('workset', 17, 17)}
    <div class="scombo ws"><svg class="icon" width="9" height="6" viewBox="0 0 9 6"><path d="M.5 .5l4 4 4-4" fill="none" stroke="#aaa" stroke-width="1.200" /></svg></div>
    {@render icon('editable', 15, 17)}
    <span class="n1">:0</span>
    {@render icon('options', 16, 16)}
    <span class="ao">{@render icon('addOpt', 16, 16)}</span>
    <div class="scombo mm"><span>Main Model</span><svg class="icon" width="9" height="6" viewBox="0 0 9 6"><path d="M.5 .5l4 4 4-4" fill="none" stroke="#555" stroke-width="1.200" /></svg></div>
    <svg class="icon chk" width="15" height="15" viewBox="0 0 15 15"><rect x="1" y="1" width="13" height="13" fill="#fff" stroke="#333" /><path d="M3.500 7.500l3 3 5-6.500" fill="none" stroke="#1c8a2c" stroke-width="2" /></svg>
    <span class="excl">Exclude Options</span>
    <div class="sicons">{#each selectIcons as n}{@render icon(n, 17, 17)}{/each}</div>
    <span class="n2">:0</span>
  </footer>
</div>

<style>
  :global(body) { background: #ededed; overflow: hidden; }
  .app {
    width: 1897px; height: 1007px; overflow: hidden; display: flex; flex-direction: column;
    font: 11.5px/15px 'Open Sans', 'Noto Sans', sans-serif; letter-spacing: -.08px; color: #333; background: #ededed;
  }
  span { white-space: pre; }
  .icon { display: block; flex: none; }

  .tabs { height: 16px; background: #808080; display: flex; color: #fff; flex: none; line-height: 12px; letter-spacing: -.12px; }
  .file { width: 38px; margin-right: 3px; background: #2b7ab5; text-align: center; padding-right: 6px; box-sizing: border-box; }
  .tab { padding-left: 9px; margin-right: -9px; flex: none; height: 16px; }
  .tab.active { background: linear-gradient(#ededed, #ededed) 0 0 / 67px 100% no-repeat; color: #222; }
  .tabs > .icon { margin-left: 9px; margin-top: -.5px; }

  .ribbon { height: 95px; display: flex; flex: none; border-bottom: 1.500px solid #888; box-sizing: content-box; }
  .group { box-sizing: border-box; border-right: 1px solid #d4d4d4; height: 92px; margin-top: 1px; display: flex; flex-direction: column; flex: none; }
  .group:last-child { border-right: 0; }
  .tools { display: flex; height: 76px; }
  .gname { text-align: center; line-height: 16px; }
  .big { box-sizing: border-box; flex: none; display: flex; flex-direction: column; align-items: center; padding-top: 5px; line-height: 15px; }
  .big .icon { margin-bottom: 1px; }
  .smalls { box-sizing: border-box; flex: none; padding-top: 1px; }
  .small { height: 24px; display: flex; align-items: center; gap: 3px; }
  .caret { border: 3px solid transparent; border-top: 4px solid #555; border-bottom: 0; margin-top: 3px; }
  .cmd { width: 200px; height: 22px; margin: 27px 0 0 2px; border: 1px solid #b5b9bf; background: #fff; box-sizing: border-box; font-style: italic; color: #666; line-height: 20px; padding-left: 2px; letter-spacing: -.35px; }
  .optionsbar { height: 26px; flex: none; }

  main { flex: 1; display: flex; border-top: 2px solid #c9c9c9; min-height: 0; }
  .props { width: 345px; border-right: 2px solid #c9c9c9; flex: none; display: flex; flex-direction: column; }
  .phead { height: 20px; display: flex; align-items: center; justify-content: space-between; padding-right: 4px; line-height: 20px; }
  .phead span { margin-left: -4px; margin-top: 1px; }
  .typebox { box-sizing: border-box; width: 343px; height: 72px; border: 1px solid #c8c8cc; border-left: 0; background: #fff; display: flex; align-items: center; }
  .thumb { width: 63px; height: 66px; border: 1px solid #c8c8cc; border-left: 0; display: flex; align-items: center; padding-left: 12px; box-sizing: border-box; margin-right: 4px; }
  .typebox .wide { margin-left: auto; margin-right: 1px; border-left-width: 4px; border-right-width: 4px; }
  .selrow { display: flex; height: 25px; padding-top: 1px; box-sizing: border-box; color: #111; }
  .combo { width: 261px; height: 23px; box-sizing: border-box; border: 1px solid #999; border-left: 0; display: flex; align-items: center; justify-content: space-between; padding-right: 4px; }
  .combo span { margin-left: -2px; }
  .edittype { width: 81px; height: 22px; margin-left: 1px; background: #fff; display: flex; align-items: center; gap: 4px; padding-left: 4px; box-sizing: border-box; }
  .edittype span { margin-top: -3px; }
  .plist { width: 343px; background: #fff; flex: 1; color: #000; }
  .sect { height: 18px; background: #d9dcdb; display: flex; justify-content: space-between; align-items: center; padding-right: 5px; box-sizing: border-box; padding-bottom: 1px; }
  .sect span { margin-left: -3px; line-height: 15px; }
  .row {
    height: 18px; box-sizing: border-box; padding-bottom: 1px; display: flex; line-height: 16px;
    background: repeating-linear-gradient(90deg, #777 0 1px, transparent 1px 2px) 0 100% / 100% 1px no-repeat;
  }
  .name, .value, .end { background: repeating-linear-gradient(180deg, #777 0 1px, transparent 1px 2px) 100% 0 / 1px 100% no-repeat; box-sizing: border-box; flex: none; }
  .name { width: 164px; padding-left: 2px; }
  .value { width: 167px; padding-left: 2px; display: flex; }
  .end { width: 12px; }
  .row.off { color: #808080; }
  .row.field .value { border: 1px solid #000; padding-left: 4px; line-height: 14px; }
  .box { width: 11px; height: 11px; border: 1px solid #222; margin: 3px 0 0 1px; }
  .off .box { border-color: #ccc; }
  .pbtn, .morebtn { font-weight: 400; box-sizing: border-box; background: #ebebeb; border: 1px solid #999; border-right: 2px solid #a5a5a5; border-bottom: 2px solid #a5a5a5; }
  .pbtn { width: 165px; height: 16px; margin-top: 1px; margin-left: -1px; text-align: center; line-height: 14px; padding-right: 2px; }
  .morebtn { display: block; width: 10px; height: 16px; margin: 1px 0 0 1px; }
  .pfoot { height: 27px; display: flex; justify-content: space-between; padding-right: 4px; }
  .link { color: #0a6cc8; text-decoration: underline; margin-left: -4px; line-height: 24px; }
  .apply { width: 71px; height: 19px; margin-top: 2px; border: 1px solid #b0b0b0; background: #c9c9c9; color: #888; text-align: center; line-height: 19px; }

  .work { width: 1238px; flex: none; display: flex; flex-direction: column; border-right: 2px solid #c9c9c9; }
  .doctabs { height: 20px; background: #c9c9c9; display: flex; align-items: center; }
  .doc { height: 20px; display: flex; align-items: center; box-sizing: border-box; width: 144px; padding-left: 4px; gap: 7px; letter-spacing: .05px; }
  .doc.on { background: #fff; width: 128px; gap: 8px; color: #222; font-weight: 600; justify-content: flex-start; padding-left: 5px; padding-right: 5px; }
  .doc.on .icon:last-child { margin-left: auto; }
  .menu { margin-left: auto; margin-right: 5px; }
  .canvas { background: #fff; flex: 1; position: relative; }
  .scene { display: block; }
  .viewbar { position: absolute; left: 26px; top: 803px; display: flex; align-items: center; gap: 4.900px; height: 16px; color: #111; }
  .viewbar span { width: 50px; margin-top: 3px; }

  .browser { flex: 1; display: flex; flex-direction: column; color: #111; overflow: hidden; }
  .bhead { height: 20px; line-height: 21px; padding-left: 4px; color: #333; flex: none; }
  .tree { margin-left: 2px; background: #fff; height: 821px; overflow: hidden; position: relative; }
  .node { height: 18px; display: flex; align-items: center; flex: none; }
  .node span { line-height: 18px; height: 18px; }
  .exp { width: 9px; height: 9px; box-sizing: border-box; border: 1px solid #8a8a8a; flex: none; margin-top: 2px;
    background: linear-gradient(#3556a8, #3556a8) center / 5px 1px no-repeat, #f6f6f6; }
  .exp.plus { background: linear-gradient(#3556a8, #3556a8) center / 5px 1px no-repeat, linear-gradient(#3556a8, #3556a8) center / 1px 5px no-repeat, #f6f6f6; }
  .dash { height: 1px; flex: none; margin-top: 2px; background: repeating-linear-gradient(90deg, #999 0 1px, transparent 1px 2px); }
  .trunk, .branch, .leaf { width: 1px; height: 18px; flex: none; background: repeating-linear-gradient(180deg, #999 0 1px, transparent 1px 2px); }
  .l0 { padding-left: 4px; }
  .l0 .dash { width: 6px; margin-right: 1px; }
  .l0 .sel { background: #ebebeb; padding: 0 3px; margin-left: 3px; line-height: 17px; }
  .l1 { padding-left: 8px; }
  .l1 .exp { margin-left: 15px; }
  .l1 .dash { width: 10px; margin-right: 3px; }
  .l2 { padding-left: 8px; }
  .l2 .branch { margin-left: 19px; }
  .l2 .leaf { margin-left: 19px; }
  .l2.last .leaf { height: 10px; align-self: flex-start; }
  .l2 .dash { width: 14px; margin-right: 3px; }
  .cur { font-weight: 700; color: #000; }

  footer { height: 24px; background: #c9c9c9; flex: none; display: flex; align-items: center; color: #111; }
  .hint { width: 893px; margin-left: -4px; flex: none; }
  .scombo { height: 18px; background: #fff; display: flex; align-items: center; box-sizing: border-box; flex: none; margin-top: 2px; }
  .ws { width: 204px; margin: 2px 8px 0; justify-content: flex-end; padding-right: 3px; }
  .n1 { width: 33px; margin-left: 6px; }
  .ao { margin-left: 10px; }
  .mm { width: 204px; margin-left: 8px; padding: 0 3px 0 2px; justify-content: space-between; }
  .mm span { margin-top: -2px; }
  .chk { margin: 0 3px 0 9px; }
  .excl { width: 200px; }
  .sicons { display: flex; gap: 9px; }
  .n2 { margin-left: -4px; }
</style>
